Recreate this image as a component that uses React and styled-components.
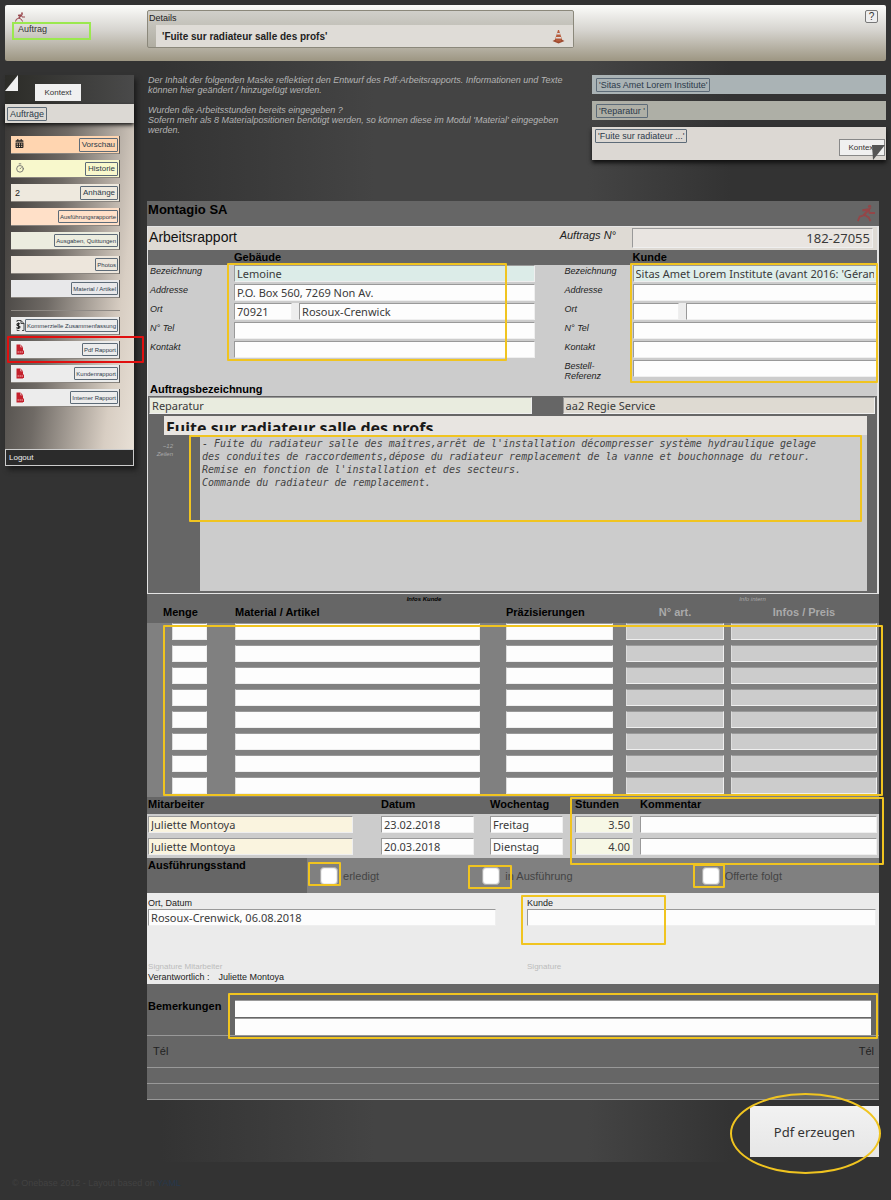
import { styled, createGlobalStyle } from "styled-components";
import { FaCalendarAlt } from "react-icons/fa";
import { LuTimer } from "react-icons/lu";

const GlobalStyle = createGlobalStyle`
  * {
    box-sizing: border-box;
  }

  body {
    margin: 0;
    color: #222;
    background: #333;
    font-family: "Liberation Sans", Arial, sans-serif;
  }
`;

const Page = styled.div`
  padding-top: 5px;
`;

/* ---------- shared ---------- */

const Highlight = styled.span`
  position: absolute;
  z-index: 2;
  inset: ${(props) => props.$inset};
  border: ${(props) => props.$size || 2}px solid ${(props) => props.$color || "#f0c420"};
  border-radius: ${(props) => (props.$round ? "50%" : "1px")};
  pointer-events: none;
`;

const Input = styled.input`
  display: block;
  width: 100%;
  min-width: 0;
  height: 17px;
  margin: 0;
  padding: 0 2px;
  color: #3a3a3a;
  font-size: ${(props) => props.$size || 11}px;
  font-family: "Noto Sans", sans-serif;
  text-align: ${(props) => props.$align || "left"};
  background: ${(props) => props.$bg || "#fdfdfd"};
  border: 1px solid #efefef;
  border-top-color: #999;
  border-left-color: #999;
  border-radius: 0;
  outline: none;
`;

const ContextButton = styled.button`
  height: 17px;
  width: 46px;
  padding: 0;
  color: #333;
  font-size: 8px;
  font-family: inherit;
  background: #f0f0f0;
  border: 1px solid ${(props) => (props.$outlined ? "#888" : "#f0f0f0")};
  cursor: pointer;
`;

/* ---------- top bar ---------- */

const TopBar = styled.header`
  display: flex;
  align-items: flex-start;
  height: 56px;
  margin: 0 5px;
  padding: 5px 8px 0 7px;
  border-radius: 2px;
  background: linear-gradient(#fcfcfa, #d6d4cf 45%, #9d9682);
`;

const Brand = styled.div`
  width: 135px;
  padding-top: 2px;

  svg {
    display: block;
    margin-left: 3px;
  }
`;

const ModuleName = styled.div`
  width: 79px;
  height: 18px;
  padding-left: 4px;
  color: #333;
  font-size: 9px;
  line-height: 11px;
  border: 2px solid #9be84f;
`;

const Details = styled.section`
  width: 427px;
  height: 38px;
  padding: 2px 0 0 8px;
  border: 1px solid #8b887b;
  border-radius: 2px;
  background: linear-gradient(#d0cfca, #b0ada1);
`;

const DetailsLabel = styled.h2`
  margin: 0 0 1px -7px;
  font-size: 9px;
  font-weight: 400;
  line-height: 11px;
`;

const DetailsTitle = styled.div`
  display: flex;
  align-items: center;
  justify-content: space-between;
  height: 22px;
  padding: 0 8px 0 6px;
  font-size: 10px;
  font-weight: 700;
  background: #dfdcd7;
`;

const HelpButton = styled.button`
  width: 13px;
  height: 13px;
  margin-left: auto;
  padding: 0;
  color: #333;
  font-size: 10px;
  line-height: 10px;
  font-family: inherit;
  background: #eee;
  border: 1px solid #777;
  border-radius: 2px;
`;

/* ---------- sidebar ---------- */

const Body = styled.div`
  display: flex;
  align-items: flex-start;
  gap: 13px;
  padding: 14px 5px 5px;
  background: linear-gradient(90deg, #333 18%, #444 42%, #444 66%, #333 82%);
`;

const Sidebar = styled.aside`
  flex: 0 0 129px;
  box-shadow: 3px 4px 5px #1c1c1c;
`;

const SidebarTop = styled.div`
  position: relative;
  height: 29px;
  padding: 6px 0 0 30px;
  background: linear-gradient(90deg, #2c2c28, #4a4a4a);
`;

const Corner = styled.svg`
  position: absolute;
  left: ${(props) => (props.$end ? "auto" : 0)};
  right: ${(props) => (props.$end ? "1px" : "auto")};
  top: ${(props) => (props.$end ? "18px" : 0)};
`;

const SidebarHead = styled.div`
  display: flex;
  align-items: center;
  height: 19px;
  padding-left: 2px;
  background: #dcd9d4;
  box-shadow: 0 2px 4px #111;
  position: relative;
`;

const Tag = styled.a`
  padding: ${(props) => (props.$small ? "3px 1px 2px" : "1px 2px")};
  color: #2c3a4a;
  font-size: ${(props) => props.$size}px;
  line-height: ${(props) => (props.$small ? 6 : 10)}px;
  text-decoration: none;
  white-space: nowrap;
  border: 1px solid #5d6b78;
  border-radius: 1px;
`;

const Menu = styled.nav`
  display: flex;
  flex-direction: column;
  gap: 6px;
  height: 326px;
  padding: 13px 14px 0 6px;
  background: linear-gradient(97deg, #3c3a38, #6f6a65 38%, #d8cec3 82%, #e8e0d6);
`;

const MenuItem = styled.div`
  position: relative;
  display: flex;
  align-items: center;
  justify-content: space-between;
  height: 18px;
  padding: 0 1px 0 4px;
  font-size: 9px;
  background: ${(props) => props.$bg || "#ececec"};
  border-right: 1px solid #555;
  border-bottom: 1px solid #8a857f;
`;

const MenuLine = styled.hr`
  width: 100%;
  height: 1px;
  margin: 6px 0 0;
  border: none;
  background: #8f8a85;
`;

const Logout = styled.a`
  display: block;
  height: 17px;
  padding-left: 3px;
  color: #eee;
  font-size: 8px;
  line-height: 15px;
  text-decoration: none;
  background: #2b2b2b;
  border: 1px solid #ccc;
`;

/* ---------- intro ---------- */

const Main = styled.main`
  flex: 1;
  min-width: 0;
`;

const Intro = styled.section`
  display: flex;
  justify-content: space-between;
  height: 126px;
`;

const IntroText = styled.div`
  width: 420px;
  padding-left: 1px;
  color: #b4b4b4;
  font-size: 9px;
  font-style: italic;
  line-height: 10px;

  p {
    margin: 0 0 10px;
  }
`;

const ContextList = styled.div`
  display: flex;
  flex-direction: column;
  gap: 7px;
  width: 294px;
`;

const ContextBar = styled.div`
  display: flex;
  align-items: center;
  height: 19px;
  padding-left: 4px;
  background: ${(props) => props.$bg};
`;

const ContextBox = styled.div`
  position: relative;
  display: flex;
  align-items: flex-start;
  justify-content: space-between;
  height: 33px;
  padding: 2px 1px 0 3px;
  background: #dcd8d3;
  box-shadow: 0 3px 4px #111;

  button {
    margin-top: 10px;
  }
`;

/* ---------- report ---------- */

const Report = styled.form`
  margin: 0 7px 0 0;
  background: #666;
`;

const Company = styled.div`
  display: flex;
  justify-content: space-between;
  height: 25px;
  padding: 1px 4px 0 1px;
  color: #000;
  font-size: 13px;
  font-weight: 700;

  svg {
    margin-top: 2px;
  }
`;

const Panel = styled.div`
  background: #ccc;
  border: 1px solid #e4e4e4;
  border-width: 1px 2px 1px 1px;
`;

const ReportHead = styled.div`
  display: grid;
  grid-template-columns: 410fr 72px 241fr;
  height: 23px;
  padding: 1px 4px 0 1px;
  background: #dedad4;

  input {
    height: 20px;
  }
`;

const ReportTitle = styled.h1`
  margin: 0;
  padding-top: 1px;
  color: #111;
  font-size: 14px;
  font-weight: 400;
  line-height: 16px;
`;

const NumberLabel = styled.label`
  padding-top: 1px;
  font-size: 11px;
  font-style: italic;
`;

const Halves = styled.div`
  display: grid;
  grid-template-columns: 384fr 312fr;
  gap: 30px;
  align-items: start;
  padding: 0 0 0 2px;
`;

const HalvesHead = styled(Halves)`
  height: 15px;
  background: #666;
`;

const SubTitle = styled.h3`
  margin: 0;
  padding-left: ${(props) => props.$indent || 0}px;
  color: #000;
  font-size: 11px;
  line-height: 14px;
`;

const Fields = styled.div`
  position: relative;
  display: grid;
  grid-template-columns: ${(props) => props.$label}px 1fr;
  grid-auto-rows: 17px;
  row-gap: 2px;
`;

const FieldLabel = styled.label`
  padding: 1px 12px 0 0;
  font-size: 9px;
  font-style: italic;
  line-height: 10px;
`;

const Place = styled.div`
  display: grid;
  grid-template-columns: ${(props) => props.$cols};
  gap: 7px;
  background: #ededed;
`;

const JobLabel = styled(SubTitle)`
  margin-top: 5px;
  padding-left: 2px;
`;

const JobRow = styled.div`
  display: grid;
  grid-template-columns: 382fr 312fr;
  gap: 31px;
  height: 19px;
  padding: 1px 2px 0 1px;
  background: #666;
`;

const JobBody = styled.div`
  position: relative;
  height: 178px;
  padding: 1px 10px 0 0;
  background: #666;
`;

/* the title field is taller than its slot, so the text is cut off at the base line */
const JobTitle = styled.div`
  height: 19px;
  margin-left: 16px;
  padding-bottom: 4px;
  background: #e8e5e1;

  div {
    height: 15px;
    overflow: hidden;
  }

  input {
    height: 24px;
    color: #1a1a1a;
    font-weight: 700;
    border: none;
  }
`;

const JobText = styled.div`
  display: flex;
`;

const LineHint = styled.label`
  flex: 0 0 52px;
  padding: 7px 27px 0 0;
  color: #aaa;
  font-size: 6px;
  line-height: 8px;
  text-align: right;
  font-style: italic;
`;

const TextArea = styled.textarea`
  flex: 1;
  height: 156px;
  margin: 0;
  padding: 2px;
  color: #444;
  font-size: 10px;
  font-style: italic;
  line-height: 13px;
  font-family: "DejaVu Sans Mono", monospace;
  white-space: pre;
  overflow: hidden;
  background: #ccc;
  border: none;
  outline: none;
  resize: none;
`;

/* ---------- tables ---------- */

const TableBox = styled.div`
  position: relative;
  background: ${(props) => props.$bg};
`;

const Table = styled.table`
  width: 100%;
  table-layout: fixed;
  border-collapse: collapse;

  th {
    padding: 0;
    color: #000;
    font-size: 11px;
    font-weight: 700;
    text-align: left;
    vertical-align: top;
    white-space: nowrap;
    background: #666;
  }

  td {
    padding: 0;
    vertical-align: top;
  }
`;

const MaterialTable = styled(Table)`
  tr.note th {
    height: 11px;
    padding-top: 2px;
    font-size: 6px;
    font-style: italic;
    line-height: 7px;
  }

  tr.head th {
    height: 18px;
    line-height: 14px;
  }

  th.center {
    text-align: center;
  }

  th.menge {
    padding-left: 16px;
  }

  th.intern {
    color: #aaa;
    text-align: center;
  }

  tr.note th.intern {
    font-weight: 400;
  }

  td {
    height: 22px;
  }

  tr:last-child td {
    height: 20px;
  }

  td input {
    border-left-color: #ddd;
  }
`;

const StaffTable = styled(Table)`
  th {
    height: 17px;
    line-height: 15px;
  }

  td {
    height: 22px;
    padding-top: 2px;
  }
`;

/* ---------- state, signature, remarks ---------- */

const StateRow = styled.div`
  display: flex;
  height: 35px;
  background: #808080;
`;

const StateName = styled(SubTitle)`
  flex: 0 0 160px;
  padding-left: 1px;
  background: #666;
`;

const States = styled.div`
  flex: 1;
  display: grid;
  grid-template-columns: 162fr 219fr 190fr;
`;

const State = styled.label`
  position: relative;
  display: flex;
  align-items: center;
  gap: 5px;
  padding-left: 13px;
  color: #444;
  font-size: 11px;
`;

const CheckBox = styled.input`
  appearance: none;
  width: 18px;
  height: 18px;
  margin: 0;
  background: #fff;
  border: 1px solid #aaa;
  border-radius: 4px;
  box-shadow: inset 0 0 0 1px #eee;
`;

const Signatures = styled.div`
  display: grid;
  grid-template-columns: 348fr 349fr;
  column-gap: 31px;
  height: 91px;
  padding: 5px 3px 0 1px;
  background: #ebebeb;
`;

const Signature = styled.div`
  position: relative;
  display: flex;
  flex-direction: column;
  font-size: 9px;
  line-height: 11px;

  small {
    margin-top: 35px;
    color: #bbb;
    font-size: 8px;
  }

  span + span {
    margin-left: 9px;
  }
`;

const Remarks = styled.div`
  position: relative;
  display: grid;
  grid-template-columns: 88px 1fr;
  height: 52px;
  padding: 16px 8px 0 0;
  border-bottom: 1px solid #999;

  input {
    height: 17px;
    border-width: 1px 0 0;
    margin-bottom: 1px;
  }
`;

const RemarksLabel = styled.label`
  padding-left: 1px;
  color: #000;
  font-size: 11px;
  font-weight: 700;
`;

const PhoneRow = styled.div`
  display: flex;
  justify-content: space-between;
  height: 32px;
  padding: 9px 5px 0 6px;
  font-size: 11px;
  border-bottom: 1px solid #999;
`;

const EmptyRow = styled.div`
  height: 16px;
  border-bottom: 1px solid #999;
`;

const Actions = styled.div`
  display: flex;
  justify-content: flex-end;
  padding: 6px 7px 0 0;
`;

const SubmitWrap = styled.div`
  position: relative;
`;

const SubmitButton = styled.button`
  width: 129px;
  height: 51px;
  color: #333;
  font-size: 13px;
  font-family: "Noto Sans", sans-serif;
  background: linear-gradient(#f2f2f2, #e6e6e6);
  border: none;
  cursor: pointer;
`;

const Footer = styled.footer`
  padding: 16px 12px 12px;
  color: #424242;
  font-size: 9px;
  line-height: 11px;

  a {
    color: #26384c;
    text-decoration: none;
  }
`;

const Runner = ({ size = 10, color = "#9a4a50" }) => (
  <svg width={size} height={size} viewBox="0 0 20 20" fill="none" stroke={color} strokeWidth="2">
    <circle cx="14" cy="2.5" r="1.8" fill={color} stroke="none" />
    <path d="M6 7 L13 6 L7 13" strokeWidth="2.6" />
    <path d="M13 6 L14 10 L20 10 M7 13 L3 14 L1 19 M8 12 L13 15 L15 19" />
  </svg>
);

const Cone = () => (
  <svg width="13" height="15" viewBox="0 0 26 30">
    <path d="M12 2 H14 L21 24 H5 Z" fill="#b85c3c" />
    <path d="M10.6 8 H15.4 L16.4 11 H9.6 Z M8.2 16 H17.8 L18.8 19 H7.2 Z" fill="#ddd" />
    <path d="M1 24 L7 21 H19 L25 24 L13 29 Z" fill="#9c4a30" />
    <path d="M7 21 H19 L17 25 H9 Z" fill="#b85c3c" />
  </svg>
);

const PdfIcon = () => (
  <svg width="9" height="11" viewBox="0 0 18 22">
    <path d="M3 1 H11 L16 6 V13 H18 V20 H16 V21 H3 Z" fill="#c4202c" />
    <path d="M11 1 V6 H16" fill="none" stroke="#ececec" />
    <path d="M5 16 H16" stroke="#eeb0b4" strokeWidth="2" strokeDasharray="3 1" />
  </svg>
);

const InvoiceIcon = () => (
  <svg width="10" height="11" viewBox="0 0 20 22" fill="none" stroke="#222" strokeWidth="1.6">
    <path d="M4 4 V1 H12 L18 7 V21 H14 M12 1 V7 H18 M4 19 V21 H9" />
    <path d="M10 8 C8 6 3 7 4 10 C5 13 10 11 10 14 C10 17 5 17 3 15 M7 5 V18" strokeWidth="2.2" />
  </svg>
);

const menu = [
  { label: "Vorschau", bg: "#ffd5b0", icon: <FaCalendarAlt size={9} /> },
  { label: "Historie", bg: "#f8f8cc", icon: <LuTimer size={10} color="#666" /> },
  { label: "Anhänge", bg: "#eee9de", icon: "2" },
  { label: "Ausführungsrapporte", bg: "#ffe0c8", small: true },
  { label: "Ausgaben, Quittungen", bg: "#eceddf", small: true },
  { label: "Photos", bg: "#ede6dc", small: true },
  { label: "Material / Artikel", bg: "#e8e8ea", small: true },
];

const reports = [
  { label: "Kommerzielle Zusammenfassung", icon: <InvoiceIcon /> },
  { label: "Pdf Rapport", icon: <PdfIcon />, active: true },
  { label: "Kundenrapport", icon: <PdfIcon /> },
  { label: "Interner Rapport", icon: <PdfIcon /> },
];

const staff = [
  { name: "Juliette Montoya", date: "23.02.2018", day: "Freitag", hours: "3.50" },
  { name: "Juliette Montoya", date: "20.03.2018", day: "Dienstag", hours: "4.00" },
];

const states = [
  { label: "erledigt", inset: "4px 128px 7px 1px" },
  { label: "in Ausführung", inset: "7px 177px 4px -1px" },
  { label: "Offerte folgt", inset: "6px 154px 5px 4px" },
];

const description = `- Fuite du radiateur salle des maîtres,arrêt de l'installation décompresser système hydraulique gelage
des conduites de raccordements,dépose du radiateur remplacement de la vanne et bouchonnage du retour.
Remise en fonction de l'installation et des secteurs.
Commande du radiateur de remplacement.`;

const Field = ({ id, label, ...rest }) => (
  <>
    <FieldLabel htmlFor={id}>{label}</FieldLabel>
    <Input id={id} {...rest} />
  </>
);

const App = () => {
  return (
    <Page>
      <GlobalStyle />
      <TopBar>
        <Brand>
          <Runner />
          <ModuleName>Auftrag</ModuleName>
        </Brand>
        <Details>
          <DetailsLabel>Details</DetailsLabel>
          <DetailsTitle>
            'Fuite sur radiateur salle des profs' <Cone />
          </DetailsTitle>
        </Details>
        <HelpButton>?</HelpButton>
      </TopBar>

      <Body>
        <Sidebar>
          <SidebarTop>
            <Corner width="13" height="16" viewBox="0 0 13 16">
              <path d="M13 0 V16 H0 Z" fill="#f0f0f0" />
            </Corner>
            <ContextButton>Kontext</ContextButton>
          </SidebarTop>
          <SidebarHead>
            <Tag href="#auftraege" $size={9}>
              Aufträge
            </Tag>
          </SidebarHead>
          <Menu>
            {menu.map((item) => (
              <MenuItem key={item.label} $bg={item.bg}>
                <span>{item.icon}</span>
                <Tag href="#menu" $size={item.small ? 6 : 8} $small={item.small}>
                  {item.label}
                </Tag>
              </MenuItem>
            ))}
            <MenuLine />
            {reports.map((item) => (
              <MenuItem key={item.label}>
                {item.icon}
                <Tag href="#report" $size={6} $small>
                  {item.label}
                </Tag>
                {item.active && <Highlight $inset="-5px -25px -5px -4px" $color="#e01010" />}
              </MenuItem>
            ))}
          </Menu>
          <Logout href="#logout">Logout</Logout>
        </Sidebar>

        <Main>
          <Intro>
            <IntroText>
              <p>
                Der Inhalt der folgenden Maske reflektiert den Entwurf des Pdf-Arbeitsrapports.
                Informationen und Texte können hier geändert / hinzugefügt werden.
              </p>
              <p>
                Wurden die Arbeitsstunden bereits eingegeben ?
                <br />
                Sofern mehr als 8 Materialpositionen benötigt werden, so können diese im Modul
                'Material' eingegeben werden.
              </p>
            </IntroText>
            <ContextList>
              <ContextBar $bg="#aab3b5">
                <Tag href="#kunde" $size={9}>
                  'Sitas Amet Lorem Institute'
                </Tag>
              </ContextBar>
              <ContextBar $bg="#aeafa6">
                <Tag href="#typ" $size={9}>
                  'Reparatur '
                </Tag>
              </ContextBar>
              <ContextBox>
                <Tag href="#auftrag" $size={9}>
                  'Fuite sur radiateur ...'
                </Tag>
                <ContextButton $outlined>Kontext</ContextButton>
                <Corner $end width="13" height="15" viewBox="0 0 13 15">
                  <path d="M0 0 H13 L1 15 Z" fill="#555" />
                </Corner>
              </ContextBox>
            </ContextList>
          </Intro>

          <Report>
            <Company>
              Montagio SA
              <Runner size={18} color="#944648" />
            </Company>

            <Panel>
              <ReportHead>
                <ReportTitle>Arbeitsrapport</ReportTitle>
                <NumberLabel htmlFor="nr">Auftrags N°</NumberLabel>
                <Input id="nr" $size={13} $align="right" $bg="#e9e5e1" defaultValue="182-27055" />
              </ReportHead>
              <HalvesHead>
                <SubTitle $indent={84}>Gebäude</SubTitle>
                <SubTitle $indent={68}>Kunde</SubTitle>
              </HalvesHead>
              <Halves>
                <Fields $label={84}>
                  <Field id="g-name" label="Bezeichnung" $bg="#dcece8" defaultValue="Lemoine" />
                  <Field id="g-addr" label="Addresse" defaultValue="P.O. Box 560, 7269 Non Av." />
                  <FieldLabel htmlFor="g-ort">Ort</FieldLabel>
                  <Place $cols="58px 1fr">
                    <Input aria-label="PLZ" defaultValue="70921" />
                    <Input id="g-ort" defaultValue="Rosoux-Crenwick" />
                  </Place>
                  <Field id="g-tel" label="N° Tel" />
                  <Field id="g-kontakt" label="Kontakt" />
                  <Highlight $inset="-2px 28px -3px 77px" />
                </Fields>
                <Fields $label={68}>
                  <Field
                    id="k-name"
                    label="Bezeichnung"
                    $bg="#dfeeea"
                    defaultValue="Sitas Amet Lorem Institute (avant 2016: 'Gérance Lorem')"
                  />
                  <Field id="k-addr" label="Addresse" />
                  <FieldLabel htmlFor="k-ort">Ort</FieldLabel>
                  <Place $cols="46px 1fr">
                    <Input aria-label="PLZ" />
                    <Input id="k-ort" />
                  </Place>
                  <Field id="k-tel" label="N° Tel" />
                  <Field id="k-kontakt" label="Kontakt" />
                  <Field id="k-ref" label="Bestell-Referenz" />
                  <Highlight $inset="-2px -1px -6px 65px" />
                </Fields>
              </Halves>

              <JobLabel>Auftragsbezeichnung</JobLabel>
              <JobRow>
                <Input aria-label="Auftragsbezeichnung" $bg="#e9ecdf" defaultValue="Reparatur" />
                <Input aria-label="Service" $bg="#dedad2" defaultValue="aa2 Regie Service" />
              </JobRow>
              <JobBody>
                <JobTitle>
                  <div>
                    <Input
                      aria-label="Titel"
                      $size={16}
                      $bg="#e8e5e1"
                      defaultValue="Fuite sur radiateur salle des profs"
                    />
                  </div>
                </JobTitle>
                <JobText>
                  <LineHint htmlFor="text">~12 Zeilen</LineHint>
                  <TextArea id="text" defaultValue={description} />
                </JobText>
                <Highlight $inset="20px 15px 71px 41px" />
              </JobBody>
            </Panel>

            <TableBox $bg="#808080">
              <MaterialTable>
                <colgroup>
                  <col width="25" />
                  <col width="35" />
                  <col width="28" />
                  <col />
                  <col width="26" />
                  <col width="107" />
                  <col width="13" />
                  <col width="98" />
                  <col width="7" />
                  <col width="146" />
                  <col width="2" />
                </colgroup>
                <thead>
                  <tr className="note">
                    <th colSpan={3} />
                    <th className="center" colSpan={3}>
                      Infos Kunde
                    </th>
                    <th />
                    <th className="intern" colSpan={4}>
                      Info intern
                    </th>
                  </tr>
                  <tr className="head">
                    <th className="menge" colSpan={3}>
                      Menge
                    </th>
                    <th colSpan={2}>Material / Artikel</th>
                    <th colSpan={2}>Präzisierungen</th>
                    <th className="intern">N° art.</th>
                    <th />
                    <th className="intern">Infos / Preis</th>
                    <th />
                  </tr>
                </thead>
                <tbody>
                  {Array.from({ length: 8 }, (_, i) => (
                    <tr key={i}>
                      <td />
                      <td>
                        <Input aria-label="Menge" />
                      </td>
                      <td />
                      <td>
                        <Input aria-label="Material / Artikel" />
                      </td>
                      <td />
                      <td>
                        <Input aria-label="Präzisierungen" />
                      </td>
                      <td />
                      <td>
                        <Input aria-label="N° art." $bg="#ccc" />
                      </td>
                      <td />
                      <td>
                        <Input aria-label="Infos / Preis" $bg="#ccc" />
                      </td>
                      <td />
                    </tr>
                  ))}
                </tbody>
              </MaterialTable>
              <Highlight $inset="31px -4px 1px 16px" />
            </TableBox>

            <TableBox $bg="#ccc">
              <StaffTable>
                <colgroup>
                  <col width="1" />
                  <col width="205" />
                  <col width="28" />
                  <col width="93" />
                  <col width="16" />
                  <col width="73" />
                  <col width="12" />
                  <col width="58" />
                  <col width="7" />
                  <col />
                  <col width="2" />
                </colgroup>
                <thead>
                  <tr>
                    <th />
                    <th colSpan={2}>Mitarbeiter</th>
                    <th colSpan={2}>Datum</th>
                    <th colSpan={2}>Wochentag</th>
                    <th colSpan={2}>Stunden</th>
                    <th colSpan={2}>Kommentar</th>
                  </tr>
                </thead>
                <tbody>
                  {staff.map((row) => (
                    <tr key={row.date}>
                      <td />
                      <td>
                        <Input aria-label="Mitarbeiter" $bg="#faf4df" defaultValue={row.name} />
                      </td>
                      <td />
                      <td>
                        <Input aria-label="Datum" defaultValue={row.date} />
                      </td>
                      <td />
                      <td>
                        <Input aria-label="Wochentag" defaultValue={row.day} />
                      </td>
                      <td />
                      <td>
                        <Input
                          aria-label="Stunden"
                          $bg="#f7f8e6"
                          $align="right"
                          defaultValue={row.hours}
                        />
                      </td>
                      <td />
                      <td>
                        <Input aria-label="Kommentar" />
                      </td>
                      <td />
                    </tr>
                  ))}
                </tbody>
              </StaffTable>
              <Highlight $inset="0 -5px -7px 423px" />
            </TableBox>

            <StateRow>
              <StateName>Ausführungsstand</StateName>
              <States>
                {states.map((state) => (
                  <State key={state.label}>
                    <CheckBox type="checkbox" />
                    {state.label}
                    <Highlight $inset={state.inset} />
                  </State>
                ))}
              </States>
            </StateRow>

            <Signatures>
              <Signature>
                <label htmlFor="ort-datum">Ort, Datum</label>
                <Input id="ort-datum" defaultValue="Rosoux-Crenwick, 06.08.2018" />
                <small>Signature Mitarbeiter</small>
                <div>
                  <span>Verantwortlich :</span>
                  <span>Juliette Montoya</span>
                </div>
              </Signature>
              <Signature>
                <label htmlFor="kunde">Kunde</label>
                <Input id="kunde" />
                <small>Signature</small>
                <Highlight $inset="-3px 210px 39px -6px" />
              </Signature>
            </Signatures>

            <Remarks>
              <RemarksLabel htmlFor="bemerkung">Bemerkungen</RemarksLabel>
              <div>
                <Input id="bemerkung" />
                <Input aria-label="Bemerkungen, Zeile 2" />
              </div>
              <Highlight $inset="9px 1px -4px 81px" />
            </Remarks>
            <PhoneRow>
              <span>Tél</span>
              <span>Tél</span>
            </PhoneRow>
            <EmptyRow />
            <EmptyRow />
          </Report>

          <Actions>
            <SubmitWrap>
              <SubmitButton type="button">Pdf erzeugen</SubmitButton>
              <Highlight $inset="-13px -2px -17px -20px" $round />
            </SubmitWrap>
          </Actions>
        </Main>
      </Body>

      <Footer>
        © Onebase 2012 - Layout based on <a href="#yaml">YAML</a>
      </Footer>
    </Page>
  );
};

export default App;
